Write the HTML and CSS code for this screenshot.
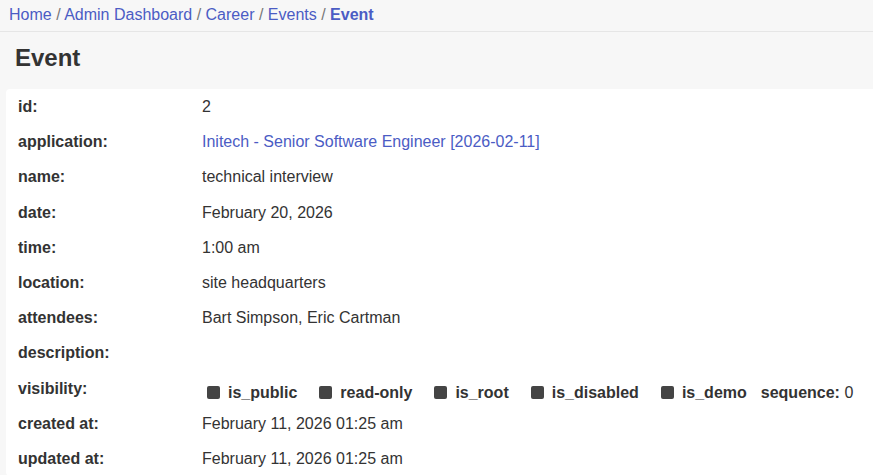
FILE: index.html
```html
<!DOCTYPE html>
<html lang="en">
<head>
<meta charset="utf-8">
<title>Event</title>
<link rel="stylesheet" href="styles.css">
</head>
<body>
<nav class="breadcrumb">
  <a href="#">Home</a> / <a href="#">Admin Dashboard</a> / <a href="#">Career</a> / <a href="#">Events</a> / <a href="#" class="current">Event</a>
</nav>
<h1 class="page-title">Event</h1>
<div class="card">
  <div class="row"><div class="label">id:</div><div class="value">2</div></div>
  <div class="row"><div class="label">application:</div><div class="value"><a href="#">Initech - Senior Software Engineer [2026-02-11]</a></div></div>
  <div class="row"><div class="label">name:</div><div class="value">technical interview</div></div>
  <div class="row"><div class="label">date:</div><div class="value">February 20, 2026</div></div>
  <div class="row"><div class="label">time:</div><div class="value">1:00 am</div></div>
  <div class="row"><div class="label">location:</div><div class="value">site headquarters</div></div>
  <div class="row"><div class="label">attendees:</div><div class="value">Bart Simpson, Eric Cartman</div></div>
  <div class="row"><div class="label">description:</div><div class="value"></div></div>
  <div class="row"><div class="label">visibility:</div>
    <div class="value flags">
      <span class="flag"><span class="box"></span>is_public</span>
      <span class="flag"><span class="box"></span>read-only</span>
      <span class="flag"><span class="box"></span>is_root</span>
      <span class="flag"><span class="box"></span>is_disabled</span>
      <span class="flag last"><span class="box"></span>is_demo</span>
      <span class="seq"><b>sequence:</b> 0</span>
    </div>
  </div>
  <div class="row"><div class="label">created at:</div><div class="value">February 11, 2026 01:25 am</div></div>
  <div class="row"><div class="label">updated at:</div><div class="value">February 11, 2026 01:25 am</div></div>
</div>
</body>
</html>
```
FILE: styles.css
```css
html, body {
  margin: 0;
  padding: 0;
  background: #f7f7f7;
  overflow: hidden;
}
body {
  font-family: "Liberation Sans", Arial, sans-serif;
  font-size: 16px;
  color: #333333;
}
a {
  color: #4b5cc4;
  text-decoration: none;
}
.breadcrumb {
  height: 31px;
  line-height: 30px;
  padding: 0 9px;
  border-bottom: 1px solid #e6e6e6;
  color: #777;
  white-space: nowrap;
}
.breadcrumb .current {
  font-weight: bold;
}
.page-title {
  margin: 0;
  padding: 12px 15px 17px;
  font-size: 24px;
  line-height: 28px;
  font-weight: bold;
  color: #333;
}
.card {
  background: #ffffff;
  border-radius: 4px;
  margin: 0 -4px 0 6px;
}
.row {
  display: grid;
  grid-template-columns: 184px 1fr;
  padding: 8px 12px;
  line-height: 19.2px;
}
.label {
  font-weight: bold;
}
.flags {
  display: flex;
  align-items: center;
  margin-top: 4px;
  margin-bottom: -4px;
  white-space: nowrap;
}
.flag {
  display: flex;
  align-items: center;
  font-weight: bold;
  margin-right: 22px;
}
.flag.last {
  margin-right: 14px;
}
.flag:first-child .box {
  margin-left: 5px;
}
.box {
  width: 13px;
  height: 13px;
  background: #444;
  border-radius: 2px;
  margin-right: 8px;
}
.seq b {
  font-weight: bold;
}
```
